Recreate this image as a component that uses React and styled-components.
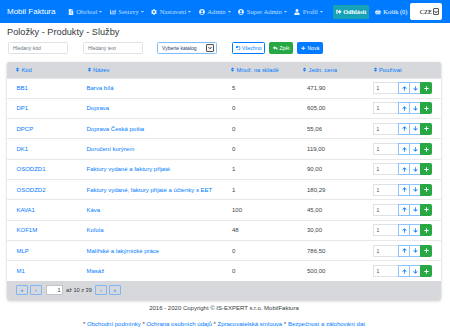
import React from 'react';
import styled, { createGlobalStyle } from 'styled-components';
import {
  FaFileAlt, FaChartBar, FaCog, FaUserCircle, FaUser, FaSignOutAlt,
  FaShoppingBasket, FaSort, FaUndo, FaReply, FaPlus, FaArrowUp, FaArrowDown, FaCaretDown, FaChevronDown,
} from 'react-icons/fa';

const Global = createGlobalStyle`
  html, body { margin: 0; padding: 0; background: #fff; }
  body { font-family: "Liberation Sans", Arial, sans-serif; color: #212529; }
  * { box-sizing: border-box; }
`;

const Navbar = styled.nav`
  height: 23px;
  background: #007bff;
  display: flex;
  align-items: center;
  padding: 0 8px 0 7px;
`;
const Brand = styled.span`
  color: #fff;
  font-size: 8px;
  margin-right: 9px;
  white-space: nowrap;
`;
const NavItem = styled.span`
  display: flex;
  align-items: center;
  gap: 2.5px;
  color: rgba(255, 255, 255, 0.75);
  font-family: "Liberation Serif", "Times New Roman", serif;
  font-size: 6.6px;
  padding: 0 3.3px;
  white-space: nowrap;
  flex-shrink: 0;
  svg { font-size: 6px; color: rgba(255,255,255,.9); }
  svg.caret { font-size: 5px; margin-left: -1.5px; color: rgba(255,255,255,.75); }
`;
const LogoutBtn = styled.span`
  display: flex;
  align-items: center;
  gap: 1.5px;
  height: 14px;
  padding: 0 3px;
  margin: 0 6px 0 6px;
  background: #17a2b8;
  color: #fff;
  border-radius: 1.5px;
  font-family: "Liberation Serif", "Times New Roman", serif;
  font-size: 6.3px;
  font-weight: bold;
  white-space: nowrap;
  flex-shrink: 0;
  svg { font-size: 5.5px; }
`;
const Cart = styled.span`
  display: flex;
  align-items: center;
  gap: 2px;
  color: #fff;
  font-family: "Liberation Serif", "Times New Roman", serif;
  font-size: 6.3px;
  white-space: nowrap;
  flex-shrink: 0;
  svg { font-size: 6px; }
`;
const LangSelect = styled.span`
  margin-left: auto;
  flex-shrink: 0;
  width: 32px;
  height: 17px;
  background: #fff;
  border-radius: 2px;
  display: flex;
  align-items: center;
  justify-content: flex-end;
  gap: 1px;
  padding-right: 3px;
  font-family: "Liberation Serif", "Times New Roman", serif;
  font-size: 6.5px;
  color: #000;
`;
const ArrowBox = styled.span`
  width: ${p => p.$w || 6}px;
  height: ${p => p.$h || 7}px;
  border: 1px solid #555;
  border-radius: 1px;
  display: inline-flex;
  align-items: center;
  justify-content: center;
  background: #f4f4f4;
  svg { font-size: 4px; color: #222; }
`;

const Page = styled.div`
  padding: 0 9px 0 7px;
`;
const Title = styled.h1`
  margin: 4px 0 4px;
  font-size: 9.2px;
  line-height: 11px;
  font-weight: normal;
  color: #343a40;
`;
const SearchRow = styled.div`
  display: flex;
  align-items: center;
  margin-left: 1px;
  height: 12px;
`;
const SearchInput = styled.span`
  width: 60px;
  height: 12px;
  border: 1px solid #dfe2e6;
  border-radius: 1.5px;
  display: flex;
  align-items: center;
  padding-left: 4px;
  font-size: 5px;
  color: #6c757d;
  margin-right: ${p => p.$mr || 0}px;
`;
const CatalogSelect = styled.span`
  width: 60px;
  height: 12px;
  border: 1px solid #80bdff;
  border-radius: 1.5px;
  display: flex;
  align-items: center;
  justify-content: space-between;
  padding: 0 2px 0 4px;
  font-size: 5px;
  color: #1d3d70;
  margin-right: 15px;
`;
const Btn = styled.span`
  height: 11.5px;
  display: inline-flex;
  align-items: center;
  gap: 1.5px;
  padding: 0 3px;
  margin-right: 4px;
  border-radius: 1.5px;
  font-size: 5px;
  white-space: nowrap;
  border: 1px solid ${p => p.$c};
  background: ${p => (p.$outline ? '#fff' : p.$c)};
  color: ${p => (p.$outline ? p.$c : '#fff')};
  svg { font-size: 4.5px; }
`;

const Card = styled.div`
  margin-top: 8px;
  box-shadow: 0 1px 3px rgba(0, 0, 0, 0.22);
  border-radius: 2px;
  overflow: hidden;
`;
const Table = styled.table`
  width: 100%;
  border-collapse: collapse;
  table-layout: fixed;
  font-size: 6px;
`;
const Th = styled.th`
  background: #d6d8db;
  height: 16px;
  padding: 0 0 0 8px;
  text-align: left;
  font-weight: normal;
  font-size: 5.8px;
  color: #007bff;
  white-space: nowrap;
  svg { font-size: 5px; vertical-align: -0.5px; margin-right: 1.5px; }
`;
const Td = styled.td`
  height: 20.3px;
  padding: 0 0 0 ${p => p.$pl || 8.5}px;
  border-top: 1px solid #e6e8eb;
  color: ${p => (p.$link ? '#007bff' : '#3b3f44')};
  white-space: nowrap;
`;
const QtyGroup = styled.div`
  display: flex;
  align-items: center;
  height: 12px;
`;
const QtyInput = styled.span`
  width: 25px;
  height: 12px;
  border: 1px solid #dfe2e6;
  border-right: none;
  font-size: 5px;
  color: #495057;
  padding-left: 2.5px;
  display: flex;
  align-items: center;
`;
const IconBtn = styled.span`
  width: ${p => p.$w || 12}px;
  height: 12px;
  display: flex;
  align-items: center;
  justify-content: center;
  border: 1px solid ${p => (p.$green ? '#28a745' : '#8ec3ff')};
  margin-left: ${p => (p.$first ? 0 : -1)}px;
  background: ${p => (p.$green ? '#28a745' : '#fff')};
  color: ${p => (p.$green ? '#fff' : '#007bff')};
  border-radius: ${p => (p.$green ? '0 1.5px 1.5px 0' : '0')};
  svg { font-size: 5px; }
`;
const Pager = styled.div`
  height: 19px;
  background: #d6d8db;
  display: flex;
  align-items: center;
  padding-left: 9px;
  font-size: 5.6px;
  color: #343a40;
`;
const PageBtn = styled.span`
  width: 12px;
  height: 10px;
  border: 1px solid #7fb6f5;
  border-radius: 1px;
  display: flex;
  align-items: center;
  justify-content: center;
  color: #007bff;
  font-size: 4.5px;
  margin-right: ${p => p.$mr || 2}px;
`;
const PageInput = styled.span`
  width: 17px;
  height: 10px;
  background: #fff;
  border: 1px solid #bfc4c9;
  display: flex;
  align-items: center;
  justify-content: flex-end;
  padding-right: 1.5px;
  font-size: 5.6px;
  margin: 0 3px 0 2px;
`;
const PagerText = styled.span`
  margin-right: 3px;
  white-space: nowrap;
`;

const Footer = styled.footer`
  text-align: center;
  font-size: 6px;
  color: #343a40;
  padding-top: 4px;
`;
const FooterLine = styled.div`
  line-height: 8px;
  margin-bottom: ${p => p.$mb || 0}px;
`;
const FLink = styled.span`
  color: #007bff;
`;

const rows = [
  ['BB1', 'Barva bílá', '5', '471,90'],
  ['DP1', 'Doprava', '0', '605,00'],
  ['DPCP', 'Doprava Česká pošta', '0', '55,06'],
  ['DK1', 'Doručení kurýrem', '0', '119,00'],
  ['OSODZD1', 'Faktury vydané a faktury přijaté', '1', '90,00'],
  ['OSODZD2', 'Faktury vydané, faktury přijaté a účtenky s EET', '1', '180,29'],
  ['KAVA1', 'Káva', '100', '45,00'],
  ['KOF1M', 'Kofola', '48', '30,00'],
  ['MLP', 'Malířské a lakýrnické práce', '0', '786,50'],
  ['M1', 'Masáž', '0', '500,00'],
];

const nav = [
  [FaFileAlt, 'Obchod'],
  [FaChartBar, 'Sestavy'],
  [FaCog, 'Nastavení'],
  [FaUserCircle, 'Admin'],
  [FaUserCircle, 'Super Admin'],
  [FaUser, 'Profil'],
];

export default function App() {
  return (
    <>
      <Global />
      <Navbar>
        <Brand>Mobil Faktura</Brand>
        {nav.map(([Icon, label]) => (
          <NavItem key={label}>
            <Icon />
            {label}
            <FaCaretDown className="caret" />
          </NavItem>
        ))}
        <LogoutBtn><FaSignOutAlt />Odhlásit</LogoutBtn>
        <Cart><FaShoppingBasket />Košík (0)</Cart>
        <LangSelect>
          CZE
          <ArrowBox><FaChevronDown /></ArrowBox>
        </LangSelect>
      </Navbar>
      <Page>
        <Title>Položky - Produkty - Služby</Title>
        <SearchRow>
          <SearchInput $mr={15}>Hledaný kód</SearchInput>
          <SearchInput $mr={14}>Hledaný text</SearchInput>
          <CatalogSelect>
            Vyberte katalog
            <ArrowBox $w={8} $h={8}><FaChevronDown /></ArrowBox>
          </CatalogSelect>
          <Btn $outline $c="#007bff"><FaUndo />Všechno</Btn>
          <Btn $c="#28a745"><FaReply />Zpět</Btn>
          <Btn $c="#007bff"><FaPlus />Nová</Btn>
        </SearchRow>
        <Card>
          <Table>
            <colgroup>
              <col style={{ width: '71.5px' }} />
              <col style={{ width: '143.5px' }} />
              <col style={{ width: '72px' }} />
              <col style={{ width: '70.5px' }} />
              <col />
            </colgroup>
            <thead>
              <tr>
                <Th><FaSort />Kód</Th>
                <Th><FaSort />Název</Th>
                <Th><FaSort />Množ. na skladě</Th>
                <Th><FaSort />Jedn. cena</Th>
                <Th><FaSort />Používat</Th>
              </tr>
            </thead>
            <tbody>
              {rows.map(([code, name, qty, price]) => (
                <tr key={code}>
                  <Td $link $pl={9.5}>{code}</Td>
                  <Td $link $pl={8}>{name}</Td>
                  <Td $pl={10}>{qty}</Td>
                  <Td $pl={13}>{price}</Td>
                  <Td $pl={8.5}>
                    <QtyGroup>
                      <QtyInput>1</QtyInput>
                      <IconBtn $first><FaArrowUp /></IconBtn>
                      <IconBtn><FaArrowDown /></IconBtn>
                      <IconBtn $green $w={12}><FaPlus /></IconBtn>
                    </QtyGroup>
                  </Td>
                </tr>
              ))}
            </tbody>
          </Table>
          <Pager>
            <PageBtn>«</PageBtn>
            <PageBtn>‹</PageBtn>
            <PageInput>1</PageInput>
            <PagerText>až 10 z 39</PagerText>
            <PageBtn>›</PageBtn>
            <PageBtn>»</PageBtn>
          </Pager>
        </Card>
        <Footer>
          <FooterLine $mb={8}>2016 - 2020 Copyright © IS-EXPERT s.r.o. MobilFaktura</FooterLine>
          <FooterLine>
            * <FLink>Obchodní podmínky</FLink> * <FLink>Ochrana osobních údajů</FLink> * <FLink>Zpracovatelská smlouva</FLink> * <FLink>Bezpečnost a zálohování dat</FLink>
          </FooterLine>
        </Footer>
      </Page>
    </>
  );
}
